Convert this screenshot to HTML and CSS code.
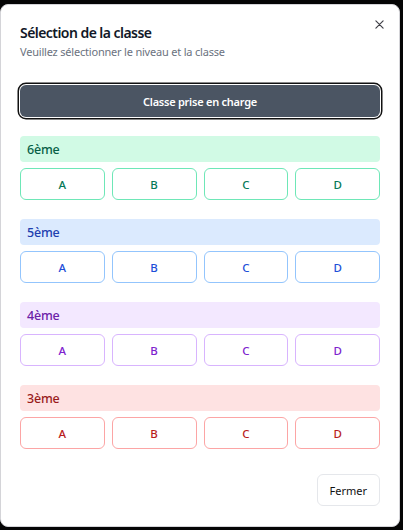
FILE: index.html
```html
<!DOCTYPE html>
<html lang="fr">
<head>
<meta charset="utf-8">
<link rel="stylesheet" href="styles.css">
</head>
<body>
<div class="dialog">
  <button class="close" aria-label="Fermer">
    <svg width="9" height="9" viewBox="0 0 10 10"><path d="M1 1L9 9M9 1L1 9" stroke="#3f3f46" stroke-width="1.3" fill="none" stroke-linecap="round"/></svg>
  </button>
  <div class="head">
    <h2 class="title">Sélection de la classe</h2>
    <p class="subtitle">Veuillez sélectionner le niveau et la classe</p>
  </div>
  <button class="primary">Classe prise en charge</button>
  <div class="levels">
    <section class="level green">
      <div class="level-name">6ème</div>
      <div class="classes"><button>A</button><button>B</button><button>C</button><button>D</button></div>
    </section>
    <section class="level blue">
      <div class="level-name">5ème</div>
      <div class="classes"><button>A</button><button>B</button><button>C</button><button>D</button></div>
    </section>
    <section class="level purple">
      <div class="level-name">4ème</div>
      <div class="classes"><button>A</button><button>B</button><button>C</button><button>D</button></div>
    </section>
    <section class="level red">
      <div class="level-name">3ème</div>
      <div class="classes"><button>A</button><button>B</button><button>C</button><button>D</button></div>
    </section>
  </div>
  <div class="footer"><button class="secondary">Fermer</button></div>
</div>
</body>
</html>
```
FILE: styles.css
```css
* { box-sizing: border-box; }
html, body { margin: 0; padding: 0; background: #050505; }
body { font-family: "Noto Sans", "Open Sans", sans-serif; width: 403px; height: 530px; overflow: hidden; }
button { font-family: inherit; cursor: pointer; }

.dialog {
  position: relative;
  margin-top: 4px;
  width: 400px;
  height: 523px;
  background: #fff;
  border: 1px solid #d4d4d8;
  border-radius: 8px;
  padding: 18px 19px 0 19px;
  display: flex;
  flex-direction: column;
}
.close {
  position: absolute;
  top: 11px;
  right: 12px;
  width: 16px;
  height: 16px;
  padding: 0;
  border: 0;
  background: transparent;
  display: flex;
  align-items: center;
  justify-content: center;
}
.head { display: flex; flex-direction: column; gap: 1px; }
.title { margin: 0; font-size: 14px; font-weight: 600; color: #111827; line-height: 20px; letter-spacing: -0.55px; }
.subtitle { margin: 0; font-size: 11px; color: #6b7280; line-height: 16px; letter-spacing: -0.2px; }

.primary {
  margin-top: 25px;
  height: 32px;
  width: 100%;
  background: #4b5563;
  color: #fff;
  border: 0;
  border-radius: 6px;
  font-size: 11px;
  font-weight: 600;
  letter-spacing: -0.25px;
  box-shadow: 0 0 0 1px #fff, 0 0 0 2.5px #111;
}

.levels { margin-top: 19px; display: flex; flex-direction: column; gap: 19px; }
.level { display: flex; flex-direction: column; gap: 6px; }
.level-name {
  height: 26px;
  border-radius: 4px;
  padding: 0 7px;
  display: flex;
  align-items: center;
  font-size: 12.5px;
  font-weight: 500;
  letter-spacing: -0.2px;
}
.classes { display: grid; grid-template-columns: repeat(4, 1fr); gap: 7px; }
.classes button {
  height: 32px;
  background: #fff;
  border: 1px solid;
  border-radius: 6px;
  font-size: 11.5px;
  font-weight: 500;
}
.green .level-name { background: #d1fae5; color: #065f46; }
.green button { border-color: #6ee7b7; color: #047857; }
.blue .level-name { background: #dbeafe; color: #1e40af; }
.blue button { border-color: #93c5fd; color: #1d4ed8; }
.purple .level-name { background: #f3e8ff; color: #6b21a8; }
.purple button { border-color: #d8b4fe; color: #7e22ce; }
.red .level-name { background: #fee2e2; color: #991b1b; }
.red button { border-color: #fca5a5; color: #b91c1c; }

.footer { margin-top: 25px; display: flex; justify-content: flex-end; }
.secondary {
  height: 32px;
  padding: 0 12px;
  background: #fff;
  border: 1px solid #e5e7eb;
  border-radius: 6px;
  font-size: 11px;
  color: #111;
}
```
